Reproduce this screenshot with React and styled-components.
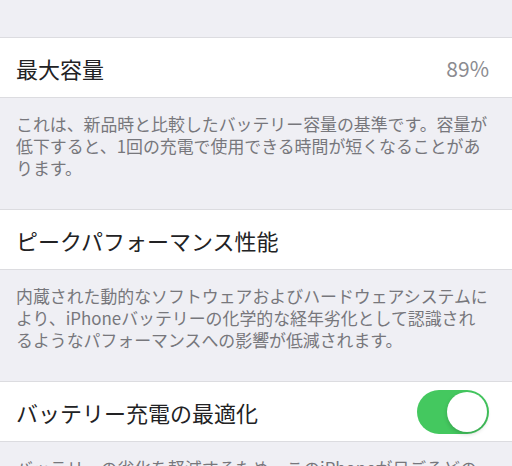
import React from "react";
import styled, { createGlobalStyle } from "styled-components";

const GlobalStyle = createGlobalStyle`
  html, body {
    margin: 0;
    padding: 0;
    background: #efeff4;
    overflow: hidden;
  }
  body {
    font-family: "Noto Sans CJK JP", "Noto Sans", sans-serif;
    -webkit-font-smoothing: antialiased;
  }
`;

const Page = styled.div`
  width: 512px;
  height: 466px;
  overflow: hidden;
  background: #efeff4;
`;

const TopSpace = styled.div`
  height: 37px;
`;

const Group = styled.div`
  background: #ffffff;
  border-top: 1px solid #dcdce0;
  border-bottom: 1px solid #dcdce0;
`;

const Row = styled.div`
  height: 59px;
  display: flex;
  align-items: center;
  justify-content: space-between;
  padding: 0 23px 0 16px;
`;

const Title = styled.span`
  font-size: 22px;
  color: #222224;
  white-space: nowrap;
`;

const Value = styled.span`
  font-size: 21px;
  color: #8b8b90;
`;

const Footer = styled.div`
  padding: 15px 16px 30px;
  font-size: 16.9px;
  line-height: 22px;
  color: #77777c;
  white-space: nowrap;
`;

const Toggle = styled.div`
  width: 72px;
  height: 44px;
  border-radius: 22px;
  background: ${(p) => (p.on ? "#44c85f" : "#e5e5ea")};
  display: flex;
  align-items: center;
  justify-content: ${(p) => (p.on ? "flex-end" : "flex-start")};
  padding: 0 2px;
  box-sizing: border-box;
`;

const Knob = styled.div`
  width: 40px;
  height: 40px;
  border-radius: 50%;
  background: #ffffff;
  box-shadow: 0 2px 4px rgba(0, 0, 0, 0.18);
`;

const sections = [
  {
    title: "最大容量",
    value: "89%",
    lines: [
      "これは、新品時と比較したバッテリー容量の基準です。容量が",
      "低下すると、1回の充電で使用できる時間が短くなることがあ",
      "ります。",
    ],
  },
  {
    title: "ピークパフォーマンス性能",
    lines: [
      "内蔵された動的なソフトウェアおよびハードウェアシステムに",
      "より、iPhoneバッテリーの化学的な経年劣化として認識され",
      "るようなパフォーマンスへの影響が低減されます。",
    ],
  },
  {
    title: "バッテリー充電の最適化",
    toggle: true,
    lines: ["バッテリーの劣化を軽減するため、このiPhoneが日ごろどの"],
  },
];

export default function App() {
  return (
    <>
      <GlobalStyle />
      <Page>
        <TopSpace />
        {sections.map((s) => (
          <React.Fragment key={s.title}>
            <Group>
              <Row>
                <Title>{s.title}</Title>
                {s.value && <Value>{s.value}</Value>}
                {s.toggle && (
                  <Toggle on>
                    <Knob />
                  </Toggle>
                )}
              </Row>
            </Group>
            <Footer>
              {s.lines.map((l, i) => (
                <div key={i}>{l}</div>
              ))}
            </Footer>
          </React.Fragment>
        ))}
      </Page>
    </>
  );
}
